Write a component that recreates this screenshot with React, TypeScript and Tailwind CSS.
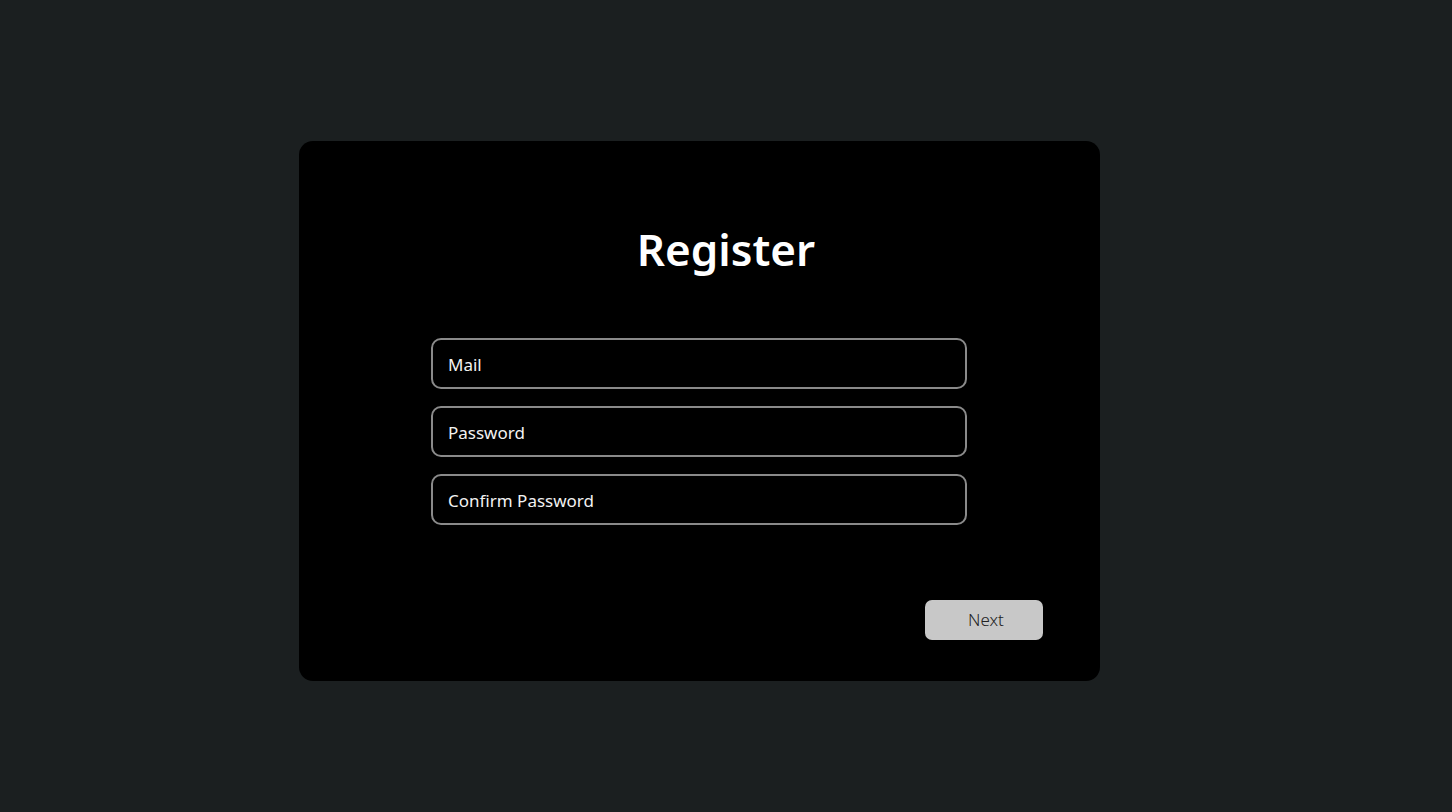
export default function App() {
  return (
    <div className="min-h-screen w-full bg-[#1b1f20] pt-[141px] pl-[299px]" style={{ fontFamily: '"Noto Sans", "Open Sans", sans-serif' }}>
      <div className="flex h-[540px] w-[801px] flex-col rounded-[14px] bg-black">
        {/* Title */}
        <h1 className="mt-[76px] pl-[53px] text-center text-[44px] font-semibold leading-[64px] text-white">
          Register
        </h1>

        {/* Fields */}
        <div className="mt-[57px] flex flex-col gap-[17px] pl-[132px]">
          {["Mail", "Password", "Confirm Password"].map((label) => (
            <input
              key={label}
              placeholder={label}
              className="h-[51px] w-[536px] rounded-[10px] border-2 border-[#8a8a8a] bg-black px-[15px] pt-[1px] text-[17px] text-white placeholder:text-[#f2f2f2] outline-none"
            />
          ))}
        </div>

        {/* Next */}
        <div className="mt-[75px] flex justify-end pr-[57px]">
          <button className="h-[40px] w-[118px] rounded-[7px] bg-[#c8c8c8] pl-[4px] text-[17px] font-light text-[#222222]">
            Next
          </button>
        </div>
      </div>
    </div>
  );
}
